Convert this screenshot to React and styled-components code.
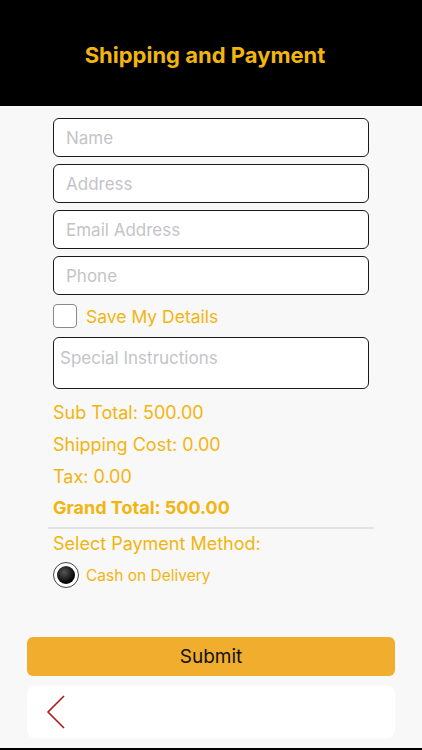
import styled, { createGlobalStyle } from "styled-components";

const GlobalStyle = createGlobalStyle`
  html, body {
    margin: 0;
    padding: 0;
    background: #f8f8f8;
    font-family: Inter, "Noto Sans", sans-serif;
  }
  * { box-sizing: border-box; }
`;

const yellow = "#f2b50f";

const Screen = styled.div`
  width: 422px;
  height: 750px;
  display: flex;
  flex-direction: column;
  background: #f8f8f8;
  border-bottom: 2px solid #000;
  overflow: hidden;
`;

const Header = styled.header`
  height: 106px;
  background: #000;
  display: flex;
  align-items: center;
  justify-content: center;
  padding: 3px 12px 0 0;
`;

const Title = styled.h1`
  margin: 0;
  color: ${yellow};
  font-size: 22px;
  font-weight: 700;
`;

const Form = styled.div`
  display: flex;
  flex-direction: column;
  padding: 12px 53px 0;
`;

const Field = styled.input`
  height: 39px;
  width: 100%;
  margin-bottom: 7px;
  border: 1.5px solid #1a1a1a;
  border-radius: 6px;
  background: #fff;
  padding: 0 12px;
  font-family: inherit;
  font-size: 17px;
  color: #222;
  &::placeholder { color: #c4c4c8; }
`;

const CheckRow = styled.label`
  display: flex;
  align-items: center;
  gap: 9px;
  height: 26px;
  margin: 1px 0 8px;
  color: ${yellow};
  font-size: 17.5px;
`;

const Box = styled.span`
  width: 24px;
  height: 24px;
  border: 1px solid #888;
  border-radius: 4px;
  background: #fff;
`;

const Notes = styled.textarea`
  height: 52px;
  width: 100%;
  resize: none;
  border: 1.5px solid #1a1a1a;
  border-radius: 6px;
  background: #fff;
  padding: 10px 6px 0;
  font-family: inherit;
  font-size: 17px;
  &::placeholder { color: #c4c4c8; }
`;

const Totals = styled.div`
  display: flex;
  flex-direction: column;
  padding-top: 8px;
`;

const Line = styled.div`
  height: ${({ $bold }) => ($bold ? 30 : 32)}px;
  line-height: ${({ $bold }) => ($bold ? 30 : 32)}px;
  color: ${yellow};
  font-size: 18px;
  font-weight: ${({ $bold }) => ($bold ? 700 : 400)};
`;

const Divider = styled.hr`
  margin: 4px -5px 0;
  border: none;
  border-top: 2px solid #e2e2e2;
`;

const Label = styled.div`
  color: ${yellow};
  font-size: 18px;
  line-height: 22px;
  margin-top: 4px;
`;

const RadioRow = styled.div`
  display: flex;
  align-items: center;
  gap: 7px;
  margin-top: 7px;
  color: ${yellow};
  font-size: 15.5px;
`;

const Radio = styled.span`
  width: 26px;
  height: 26px;
  border-radius: 50%;
  border: 1.5px solid #444;
  background: #fff;
  display: flex;
  align-items: center;
  justify-content: center;
  &::after {
    content: "";
    width: 18px;
    height: 18px;
    border-radius: 50%;
    background: radial-gradient(circle at 40% 35%, #555, #000 70%);
  }
`;

const Footer = styled.div`
  margin-top: auto;
  padding: 0 27px 10px;
  display: flex;
  flex-direction: column;
  gap: 10px;
`;

const Submit = styled.button`
  height: 39px;
  border: none;
  border-radius: 6px;
  background: #f0ad2e;
  color: #111;
  font-family: inherit;
  font-size: 19px;
`;

const NavBar = styled.div`
  height: 52px;
  background: #fff;
  border-radius: 8px;
  display: flex;
  align-items: center;
  padding-left: 18px;
`;

export default function App() {
  return (
    <>
      <GlobalStyle />
      <Screen>
        <Header>
          <Title>Shipping and Payment</Title>
        </Header>
        <Form>
          <Field placeholder="Name" />
          <Field placeholder="Address" />
          <Field placeholder="Email Address" />
          <Field placeholder="Phone" />
          <CheckRow>
            <Box />
            Save My Details
          </CheckRow>
          <Notes placeholder="Special Instructions" />
          <Totals>
            <Line>Sub Total: 500.00</Line>
            <Line>Shipping Cost: 0.00</Line>
            <Line>Tax: 0.00</Line>
            <Line $bold>Grand Total: 500.00</Line>
          </Totals>
          <Divider />
          <Label>Select Payment Method:</Label>
          <RadioRow>
            <Radio />
            Cash on Delivery
          </RadioRow>
        </Form>
        <Footer>
          <Submit>Submit</Submit>
          <NavBar>
            <svg width="22" height="36" viewBox="0 0 22 36">
              <path d="M19 2 L3 18 L19 34" fill="none" stroke="#b0161a" strokeWidth="1.6" />
            </svg>
          </NavBar>
        </Footer>
      </Screen>
    </>
  );
}
